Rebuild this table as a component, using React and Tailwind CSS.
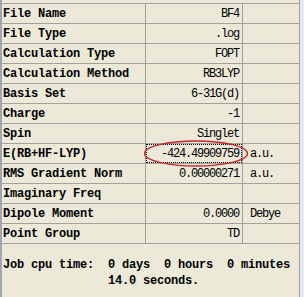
import React from 'react';

const rows = [
    { label: "File Name", value: "BF4", unit: "" },
    { label: "File Type", value: ".log", unit: "" },
    { label: "Calculation Type", value: "FOPT", unit: "" },
    { label: "Calculation Method", value: "RB3LYP", unit: "" },
    { label: "Basis Set", value: "6-31G(d)", unit: "" },
    { label: "Charge", value: "-1", unit: "" },
    { label: "Spin", value: "Singlet", unit: "" },
    { label: "E(RB+HF-LYP)", value: "-424.49909759", unit: "a.u.", focused: true },
    { label: "RMS Gradient Norm", value: "0.00000271", unit: "a.u." },
    { label: "Imaginary Freq", value: "", unit: "" },
    { label: "Dipole Moment", value: "0.0000", unit: "Debye" },
    { label: "Point Group", value: "TD", unit: "" },
];

const mono = "font-['Liberation_Mono','DejaVu_Sans_Mono',monospace]";

export default function App() {
    return (
        <div className={`relative flex w-[304px] h-[297px] overflow-hidden bg-[#ece9d8] text-black ${mono}`}>
            {/* left window edge */}
            <div className="w-[2px] shrink-0 bg-[#9ea6b6]" />

            <div className="flex flex-col w-[298px] shrink-0 border-r border-[#a3a199]">
                {/* summary grid */}
                <div className="mt-[3px] grid grid-cols-[144px_97px_56px] border-t border-[#a3a199]">
                    {rows.map((r) => (
                        <React.Fragment key={r.label}>
                            <div className="h-[20px] flex items-center pl-[1px] border-b border-r border-[#a3a199] text-[12px] font-bold tracking-[-0.2px] whitespace-pre">
                                {r.label}
                            </div>
                            <div className="h-[20px] p-[1px] border-b border-r border-[#a3a199]">
                                <div className={`h-full flex items-center justify-end pr-[2px] text-[12px] tracking-[-1.2px] whitespace-pre ${r.focused ? "outline-1 outline-dotted outline-black" : ""}`}>
                                    {r.value}
                                </div>
                            </div>
                            <div className="h-[20px] flex items-center pl-[7px] border-b border-[#a3a199] text-[12px] tracking-[-1.2px]">
                                {r.unit}
                            </div>
                        </React.Fragment>
                    ))}
                </div>

                {/* job timing */}
                <div className="mt-[13px] pl-[1px] text-[12px] font-bold leading-[16px] tracking-[-0.2px] whitespace-pre">
                    {"Job cpu time:  0 days  0 hours  0 minutes\n               14.0 seconds."}
                </div>
            </div>

            {/* right window edge */}
            <div className="flex-1 bg-[#e4e8f0]" />

            {/* red highlight around the energy value */}
            <svg className="absolute left-0 top-0 pointer-events-none" width="304" height="297">
                <ellipse cx="196" cy="153.5" rx="51.5" ry="12.5" fill="none" stroke="#c4262c" strokeWidth="1.3" />
            </svg>
        </div>
    );
}
